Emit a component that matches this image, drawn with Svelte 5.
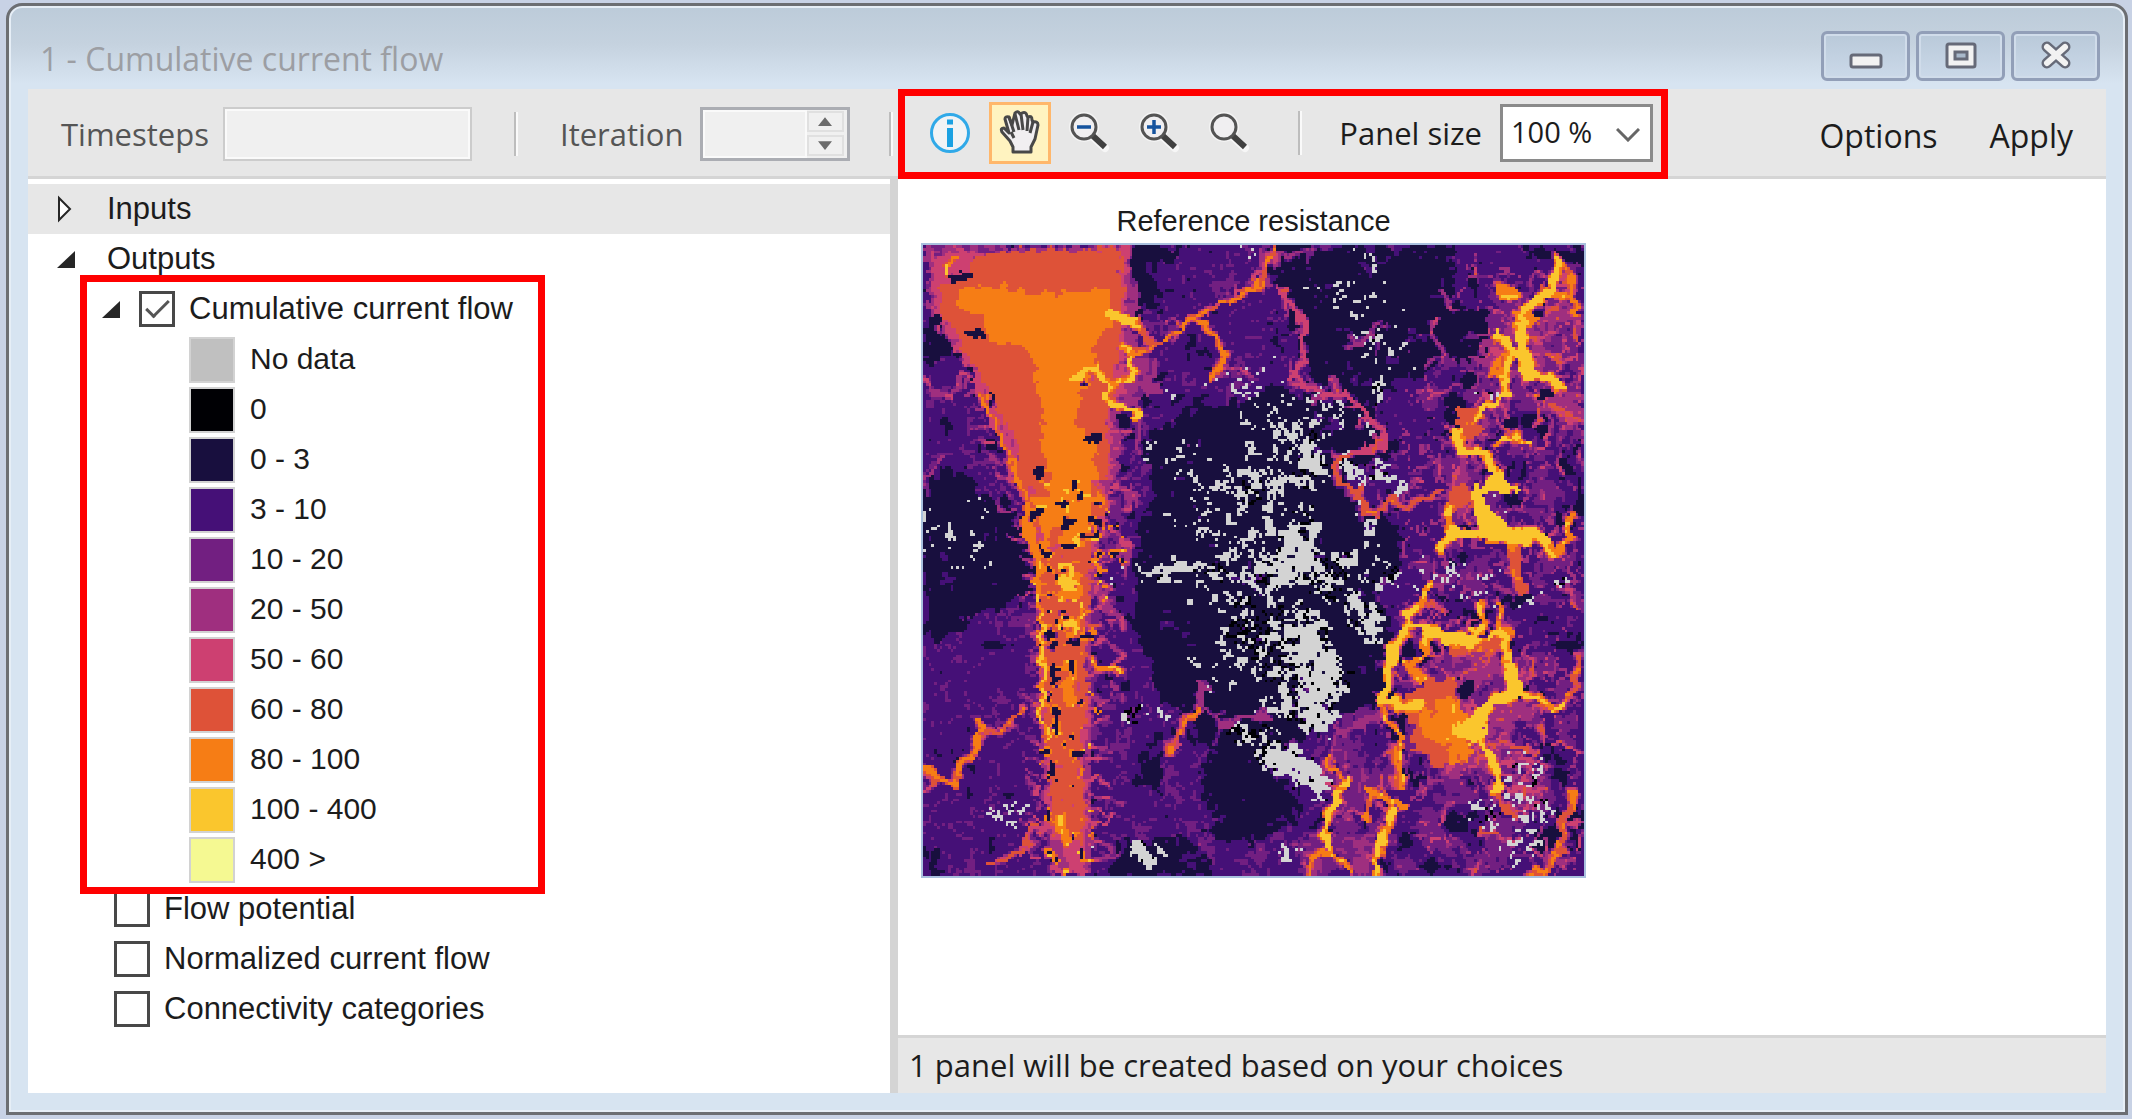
<script>
  const legend = [
    { label: 'No data', color: '#c0c0c0' },
    { label: '0', color: '#000004' },
    { label: '0 - 3', color: '#180f3e' },
    { label: '3 - 10', color: '#451077' },
    { label: '10 - 20', color: '#721f81' },
    { label: '20 - 50', color: '#9f2f7f' },
    { label: '50 - 60', color: '#cd4071' },
    { label: '60 - 80', color: '#de5238' },
    { label: '80 - 100', color: '#f67d15' },
    { label: '100 - 400', color: '#fac62d' },
    { label: '400 >', color: '#f5f992' }
  ];
  const palette = ['#000004', '#180f3e', '#451077', '#721f81', '#9f2f7f', '#cd4071', '#de5238', '#f67d15', '#fac62d', '#d3d3d3'];
  const NODATA = 9;

  let cumulative = $state(true);
  let flowPotential = $state(false);
  let normalized = $state(false);
  let categories = $state(false);
  let panelSize = $state('100');

  // Raster model: shapes are in map units (662 x 632), sampled on a coarse grid.
  const W = 662, H = 632, COLS = 240, ROWS = 228;

  const navy = [
    [[348,0],[541,0],[528,62],[561,72],[568,108],[488,125],[461,145],[438,152],[388,142],[381,95],[371,58],[358,38]],
    [[222,180],[300,160],[345,145],[440,155],[466,190],[466,210],[410,222],[440,270],[480,262],[480,320],[450,340],[475,400],[460,460],[400,480],[340,520],[380,560],[330,570],[300,560],[285,500],[260,470],[232,445],[215,380],[210,330],[215,290],[225,230]],
    [[0,235],[40,230],[60,255],[92,262],[100,300],[115,352],[60,370],[20,400],[0,410]],
    [[275,520],[340,510],[370,560],[345,600],[290,590]],
    [[200,600],[270,595],[290,632],[190,632]],
    [[205,0],[262,0],[255,18],[228,20],[235,68],[203,75]],
    [[0,62],[26,66],[36,110],[0,122]],
    [[218,520],[240,515],[245,540],[222,545]],
    [[0,600],[14,612],[20,632],[0,632]],
    [[650,560],[662,560],[662,605],[648,598]],
    [[202,86],[210,86],[212,104],[203,104]],
    [[188,145],[212,145],[214,158],[196,160]],
    [[186,178],[214,176],[218,194],[190,196]],
    [[590,0],[662,0],[662,20],[620,12]]
  ];
  const warm = [
    { v: 3.1, p: [[490,150],[662,0],[662,200],[655,632],[520,632],[400,632],[350,632],[410,500],[480,380],[500,300],[520,240]] },
    { v: 3.9, p: [[560,50],[662,20],[662,200],[590,130],[530,330],[520,250],[545,180]] },
    { v: 3.7, p: [[470,430],[560,400],[620,470],[560,530],[500,540]] },
    { v: 3.3, p: [[400,560],[440,530],[470,600],[480,632],[370,632]] },
    { v: 4.1, p: [[0,0],[206,0],[214,60],[214,110],[236,118],[234,150],[196,170],[192,250],[206,300],[176,370],[172,632],[126,632],[116,480],[116,350],[98,250],[60,150],[2,62]] },
    { v: 5.2, p: [[6,8],[204,4],[202,110],[212,120],[188,170],[188,250],[186,290],[164,370],[164,632],[130,632],[119,485],[118,352],[99,255],[60,152],[5,62]] },
    { v: 6.5, p: [[50,10],[80,6],[170,4],[196,10],[199,75],[194,125],[184,180],[185,232],[188,260],[172,300],[163,368],[164,450],[160,480],[160,600],[132,590],[122,485],[120,360],[106,295],[98,232],[86,178],[64,146],[40,110],[28,78],[12,55],[14,35],[42,28]] },
    { v: 7.5, p: [[31,45],[98,42],[138,52],[141,45],[188,48],[190,78],[175,98],[168,112],[178,125],[155,145],[155,172],[168,205],[181,252],[131,252],[121,205],[115,145],[105,102],[68,95],[58,72],[31,62]] },
    { v: 7.6, p: [[108,250],[185,245],[185,275],[150,300],[120,300]] },
    { v: 8.2, p: [[137,318],[153,318],[157,352],[136,356]] },
    { v: 6.6, p: [[465,460],[508,438],[535,435],[541,472],[565,480],[541,518],[515,522],[491,505],[495,478]] },
    { v: 7.4, p: [[500,462],[530,455],[560,490],[530,495],[505,500]] },
    { v: 8.4, p: [[533,485],[560,470],[567,485],[548,500],[535,495]] },
    { v: 7.3, p: [[588,68],[606,66],[620,74],[600,88],[590,82]] },
    { v: 6.5, p: [[534,170],[556,160],[562,190],[545,196]] },
    { v: 8.5, p: [[575,225],[594,244],[580,252],[570,246],[566,268],[582,278],[606,290],[545,294],[555,285],[550,250]] },
    { v: 6.5, p: [[525,245],[548,240],[552,262],[530,262]] }
  ];
  const holes = [[36,32,12,5],[52,88,8,4],[66,155,4,10],[165,131,12,6],[170,199,9,6],[118,230,5,7],[130,527,5,9],[131,428,4,12],[140,373,7,5],[150,398,6,6],[128,400,5,4],[12,70,6,8],[555,72,7,7],[618,68,8,7],[628,150,7,6],[546,442,7,12],[485,400,9,12],[408,587,5,7],[590,255,6,7],[550,285,8,4],[480,475,7,7]];
  const veins = [
    [7.2, 1, [201,108],[235,102],[248,88],[271,72],[288,62],[308,55],[335,42],[345,20],[350,0]],
    [7.4, 1, [271,72],[295,90],[302,115],[290,135]],
    [5, 1, [302,115],[325,130]],
    [8.6, 5, [188,68],[212,76]],
    [6.5, 5, [212,78],[228,95]],
    [8.6, 2, [151,135],[160,127],[175,125],[185,140],[185,155],[215,170]],
    [8, 2, [185,140],[208,132],[210,108],[198,105]],
    [4.6, 1, [215,170],[220,195],[214,205]],
    [5.6, 1, [358,42],[371,62],[381,82],[381,118],[370,132],[385,145],[428,152],[448,175],[465,185],[461,205],[431,208]],
    [6.6, 1, [431,208],[408,222],[418,238],[438,245],[443,268],[455,272],[468,252],[485,265],[501,252],[521,245]],
    [4.5, 2, [350,0],[338,20],[345,42]],
    [4.3, 1, [345,10],[390,6]],
    [4.3, 0, [423,105],[448,90],[455,78]],
    [8.6, 3, [635,12],[634,30],[630,45],[611,58],[598,68]],
    [7.5, 2, [630,45],[650,52],[655,70]],
    [7.3, 1, [634,15],[648,30],[650,48]],
    [8.9, 6, [601,78],[601,112],[606,128]],
    [8.5, 3, [606,128],[612,134],[630,130],[638,145]],
    [8.5, 2, [575,88],[592,112],[580,135],[585,148],[561,165],[553,172]],
    [7.6, 6, [592,50],[575,45]],
    [7.2, 4, [595,110],[578,115],[572,130]],
    [8.5, 3, [536,188],[540,205],[561,208],[575,228]],
    [7, 5, [545,180],[540,200],[560,210]],
    [6, 2, [630,160],[642,172],[660,176]],
    [8.2, 1, [575,198],[590,190],[605,200]],
    [8.9, 4, [521,305],[528,288],[570,286],[615,292],[622,296]],
    [8.9, 8, [560,288],[605,293]],
    [8.2, 2, [528,288],[528,262]],
    [8, 3, [615,292],[631,308],[645,295],[650,270]],
    [6.8, 4, [590,300],[595,335],[602,345]],
    [8.3, 2, [505,340],[495,358],[485,372],[488,382],[515,392],[545,398],[581,388],[585,415],[595,432],[595,448],[565,462],[545,485]],
    [8.8, 5, [505,387],[530,394],[548,400]],
    [6.8, 8, [535,405],[570,402],[585,390]],
    [8.9, 8, [588,425],[592,445]],
    [8.7, 6, [590,450],[565,462],[552,480]],
    [8.7, 3, [485,384],[471,405],[466,435],[461,458],[490,462],[500,460]],
    [8, 2, [505,392],[500,410],[488,422],[498,435]],
    [8, 2, [560,360],[562,380],[545,398]],
    [8, 1, [575,360],[580,388]],
    [6, 2, [495,358],[508,355],[520,368]],
    [8, 1, [460,468],[475,492],[480,505],[478,545]],
    [7, 3, [474,500],[474,540]],
    [4.5, 1, [458,468],[420,490],[408,510]],
    [7.6, 0, [408,510],[408,525],[418,535]],
    [8.3, 3, [425,535],[412,560],[402,590],[408,608]],
    [7.4, 2, [408,608],[390,612],[385,632]],
    [7.8, 0, [408,608],[425,628]],
    [7.6, 2, [445,545],[470,558],[485,562]],
    [8.3, 2, [470,558],[465,585],[457,600],[455,630]],
    [7, 1, [446,545],[443,575]],
    [8.6, 3, [555,495],[568,510],[575,535],[575,550]],
    [6.6, 2, [575,550],[590,570]],
    [5.5, 0, [575,535],[612,530]],
    [5.5, 0, [580,545],[625,548]],
    [5.2, 0, [575,525],[600,515],[625,520]],
    [5.2, 0, [588,565],[612,562]],
    [8.2, 1, [595,448],[615,450],[630,468],[645,455]],
    [6.8, 3, [645,455],[652,440],[655,425]],
    [7, 2, [650,550],[642,580],[640,605],[625,625],[610,630]],
    [6.5, 2, [655,410],[655,432]],
    [6, 1, [568,498],[615,505]],
    [7, 1, [98,465],[78,485],[62,490]],
    [7.4, 2, [58,480],[55,505],[38,522],[31,542],[11,532],[2,522]],
    [6.4, 0, [130,575],[115,580],[95,610],[68,618]],
    [7, 1, [275,465],[261,485],[245,508]],
    [4.6, 4, [278,440],[280,460]],
    [4.5, 1, [278,462],[300,482],[325,475],[345,470]],
    [8.3, 1, [118,352],[120,385],[120,440],[118,475],[125,495]],
    [8.2, 2, [160,370],[152,385],[142,372],[135,385]],
    [7.6, 6, [145,440],[150,455]],
    [7.6, 6, [138,580],[145,595]],
    [7.8, 2, [170,418],[180,425],[196,426]],
    [7.6, 1, [24,30],[24,18],[34,10]],
    [7.6, 0, [60,150],[96,232],[104,262]],
    [7.6, 3, [104,262],[106,290],[118,330]],
    [5, 2, [192,240],[212,250],[205,262]],
    [5, 2, [190,285],[205,300],[202,330]],
    [5, 2, [168,340],[195,370],[203,382]],
    [4.6, 1, [175,395],[200,412]],
    [4.8, 2, [0,130],[15,150],[28,152],[38,130]],
    [4.2, 1, [0,235],[20,212]]
  ];
  const sparse = [
    [430,40,45,40,0.1],[455,70,30,35,0.13],[460,110,25,18,0.1],[452,142,6,14,0.6],[450,92,10,6,0.5],[330,8,8,8,0.5],
    [330,140,35,22,0.13],[345,160,28,28,0.24],[260,140,20,16,0.16],[245,205,35,18,0.12],[300,240,40,30,0.28],[325,245,24,34,0.5],
    [400,158,24,12,0.35],[375,205,34,34,0.42],[385,218,16,32,0.75],[345,225,25,45,0.38],[405,178,28,18,0.3],[430,185,20,14,0.2],
    [420,225,14,8,0.75],[452,228,14,12,0.85],[480,244,7,7,1.2],[440,235,26,10,0.4],[270,270,40,25,0.24],[330,285,35,40,0.42],
    [378,300,26,34,0.9],[375,320,36,22,1],[255,329,42,7,1.1],[300,325,22,10,1],[345,330,34,34,0.46],[310,350,40,40,0.24],
    [415,330,18,28,0.6],[440,370,16,20,0.9],[455,382,10,8,0.8],[445,300,16,42,0.42],[325,385,25,45,0.5],[360,400,30,40,0.65],
    [380,395,20,38,1.05],[395,430,26,26,1.15],[410,435,22,20,1.05],[385,450,28,28,0.85],[345,425,26,26,0.48],[400,475,16,15,1.2],
    [350,470,28,25,0.4],[325,492,22,14,0.7],[345,505,18,18,0.85],[365,520,24,12,1.1],[390,532,24,14,1.2],[295,435,15,20,0.3],
    [275,415,8,6,0.4],[208,470,18,10,0.55],[232,478,16,12,0.3],[225,608,12,9,1.2],[175,605,8,20,0.35],[195,603,8,6,0.3],
    [90,565,18,14,0.36],[25,295,28,18,0.24],[55,310,18,20,0.18],[60,265,8,10,0.35],[15,285,12,20,0.2],[540,320,30,25,0.2],
    [535,345,20,14,0.4],[580,350,30,20,0.14],[640,340,8,8,0.8],[615,350,12,10,0.25],[462,335,10,16,0.5],[600,525,34,14,0.48],
    [612,550,16,18,1],[600,575,30,30,0.42],[570,580,16,22,0.48],[590,600,25,15,0.3],[370,612,12,8,0.4],[580,270,16,12,0.14],
    [560,150,12,6,0.5],[500,320,20,30,0.1],[185,330,20,10,0.12]
  ];

  function hash(x, y, s) {
    let h = Math.imul(x + 374761, 668265263) ^ Math.imul(y + 91177, 374761393) ^ Math.imul(s + 7, 1274126177);
    h = Math.imul(h ^ (h >>> 13), 1274126177);
    h = Math.imul(h ^ (h >>> 15), 2246822519);
    return ((h ^ (h >>> 16)) >>> 0) / 4294967296;
  }
  function noise(x, y, scale, s) {
    const gx = x / scale, gy = y / scale;
    const ix = Math.floor(gx), iy = Math.floor(gy);
    const fx = gx - ix, fy = gy - iy;
    const sx = fx * fx * (3 - 2 * fx), sy = fy * fy * (3 - 2 * fy);
    const a = hash(ix, iy, s), b = hash(ix + 1, iy, s), c = hash(ix, iy + 1, s), d = hash(ix + 1, iy + 1, s);
    return (a + (b - a) * sx) * (1 - sy) + (c + (d - c) * sx) * sy;
  }
  function inside(poly, x, y) {
    let hit = false;
    for (let i = 0, j = poly.length - 1; i < poly.length; j = i++) {
      const [xi, yi] = poly[i], [xj, yj] = poly[j];
      if (yi > y !== yj > y && x < ((xj - xi) * (y - yi)) / (yj - yi) + xi) hit = !hit;
    }
    return hit;
  }
  function toSegment(x, y, a, b) {
    const dx = b[0] - a[0], dy = b[1] - a[1];
    const t = Math.max(0, Math.min(1, ((x - a[0]) * dx + (y - a[1]) * dy) / (dx * dx + dy * dy)));
    return Math.hypot(x - a[0] - t * dx, y - a[1] - t * dy);
  }

  // Flatten the veins to segments and grow short side branches from them.
  const segments = [];
  function addSegment(peak, width, a, b) {
    const m = width + 8;
    segments.push({ peak, width, a, b, x0: Math.min(a[0], b[0]) - m, x1: Math.max(a[0], b[0]) + m, y0: Math.min(a[1], b[1]) - m, y1: Math.max(a[1], b[1]) + m });
  }
  function addSpur(x, y, angle, length, peak, seed) {
    const mid = [x + Math.cos(angle) * length * 0.5, y + Math.sin(angle) * length * 0.5];
    const bend = angle + (hash(seed, 3, 61) - 0.5) * 1.8;
    addSegment(peak, 0, [x, y], mid);
    addSegment(peak - 0.8, 0, mid, [mid[0] + Math.cos(bend) * length * 0.5, mid[1] + Math.sin(bend) * length * 0.5]);
  }
  veins.forEach(([peak, width, ...pts], k) => {
    for (let i = 1; i < pts.length; i++) {
      const [a, b] = [pts[i - 1], pts[i]];
      addSegment(peak, width, a, b);
      const steps = Math.floor(Math.hypot(b[0] - a[0], b[1] - a[1]) / 13);
      for (let s = 0; s < steps; s++) {
        const seed = k * 131 + i * 17 + s;
        const t = (s + hash(seed, 0, 60)) / steps;
        addSpur(a[0] + (b[0] - a[0]) * t, a[1] + (b[1] - a[1]) * t, hash(seed, 1, 60) * 6.28, 8 + hash(seed, 2, 60) * 16, Math.min(peak, 4.2 + hash(seed, 4, 60) * 2.4), seed);
      }
    }
  });
  for (let i = 0; i < 34; i++) {
    const y = 70 + i * 16.5;
    const t = Math.min(1, y / 350);
    addSpur(10 + 108 * t, y, 3.1 + hash(i, 1, 70), 10 + hash(i, 2, 70) * 16, 4.3 + hash(i, 3, 70) * 1.5, i + 900);
    addSpur(196 - 30 * t, y, hash(i, 4, 70) - 0.4, 16 + hash(i, 5, 70) * 26, 4.4 + hash(i, 6, 70) * 1.8, i + 950);
  }
  for (let i = 0; i < 70; i++) {
    addSpur(500 + hash(i, 1, 80) * 160, 20 + hash(i, 2, 80) * 600, hash(i, 3, 80) * 6.28, 14 + hash(i, 4, 80) * 24, 4.3 + hash(i, 5, 80) * 2.2, i + 1200);
  }

  function sample(c, r) {
    const x = ((c + 0.5) * W) / COLS, y = ((r + 0.5) * H) / ROWS;
    const n1 = noise(c, r, 2.2, 1) - 0.5, n2 = noise(c, r, 9, 2) - 0.5;
    const n3 = noise(c, r, 2.2, 3) - 0.5, n4 = noise(c, r, 9, 4) - 0.5;
    const wx = x + n1 * 16 + n2 * 20, wy = y + n3 * 16 + n4 * 20;
    const fine = noise(c, r, 2, 5) - 0.5;
    const broad = noise(c, r, 8, 6) - 0.5;

    let v = 2.5 + fine * 0.8 + broad * 1.1;
    if (inside(warm[0].p, wx, wy)) v = 2.6 + fine * 1.3 + broad * 2.4;
    for (let i = 1; i < 4; i++) if (inside(warm[i].p, wx, wy)) v = warm[i].v + fine * 1.4 + broad * 2.6;
    for (const p of navy) if (inside(p, wx, wy)) v = 1.25 + Math.max(0, fine + broad - 0.3) * 3;

    // fine capillaries running through the mid-valued areas
    const ridge = Math.abs(noise(c, r, 6, 8) + 0.35 * noise(c, r, 2.5, 9) - 0.67);
    if (ridge < 0.03 && v > 2) v += x > 480 ? 1.6 : 0.7;

    const sx = x + n1 * 10 + n2 * 8, sy = y + n3 * 10 + n4 * 8;
    for (let i = 4; i < warm.length; i++) {
      if (inside(warm[i].p, sx, sy)) v = warm[i].v + fine * 0.7 + (y > 240 ? broad * 1.2 : 0);
    }
    if (x > 108 && x < 212 && y > 235 && v > 4) {
      const pit = noise(c, r, 3, 12);
      if (pit > 0.79) v = 1.3 + fine;
      else if (pit > 0.69) v = 7.4 + fine * 2;
      else if (x > 168) v -= 3 * noise(c, r, 4, 13);
    }
    for (const [hx, hy, rx, ry] of holes) {
      if (((sx - hx) / rx) ** 2 + ((sy - hy) / ry) ** 2 < 1) v = 1.4;
    }
    const vx = x + (noise(c, r, 3, 21) - 0.5) * 9, vy = y + (noise(c, r, 3, 22) - 0.5) * 9;
    for (const s of segments) {
      if (vx < s.x0 || vx > s.x1 || vy < s.y0 || vy > s.y1) continue;
      const over = Math.max(0, toSegment(vx, vy, s.a, s.b) - 1 - s.width * 0.75);
      const level = s.peak + fine * 1.2 - over * 1.3;
      if (level > v && (over < 1.2 || fine > 0)) v = level;
    }

    let level = Math.max(1, Math.min(8, Math.floor(v)));
    if (level < 4) {
      let density = 0;
      for (const [bx, by, rx, ry, k] of sparse) {
        const q = ((wx - bx) / rx) ** 2 + ((wy - by) / ry) ** 2;
        if (q < 1) density = Math.max(density, k * (1 - q * 0.3));
      }
      if (density > 0) {
        const n = hash(c, r, 31) * 0.35 + noise(c, r, 2.2, 32) * 0.65;
        if (n < 0.2 + density * 0.48) level = NODATA;
        else if (density > 0.45 && hash(c, r, 33) > 0.6) level = 0;
      }
    }
    return level;
  }
  function rasterPaths() {
    const out = palette.map(() => '');
    for (let r = 0; r < ROWS; r++) {
      let start = 0, current = sample(0, r);
      for (let c = 1; c <= COLS; c++) {
        const next = c < COLS ? sample(c, r) : -1;
        if (next !== current) {
          out[current] += `M${start} ${r}h${c - start}v1h${start - c}z`;
          start = c;
          current = next;
        }
      }
    }
    return out;
  }
  const paths = rasterPaths();
</script>

{#snippet lens(kind)}
  <svg class="lens" viewBox="0 0 40 40" aria-hidden="true">
    <path d="M23 24 35 35" stroke="#f6f6f6" stroke-width="8" stroke-linecap="round" />
    <circle cx="14" cy="14" r="12" fill="#f2f2f4" stroke="#f4f4f4" stroke-width="6" />
    <path d="M22 22 35 34" stroke="#404040" stroke-width="6" />
    <circle cx="14" cy="14" r="12" fill="#f0eff1" stroke="#545454" stroke-width="3" />
    {#if kind !== 'reset'}<path d="M7 14H21" stroke="#15539e" stroke-width="3.5" />{/if}
    {#if kind === 'in'}<path d="M14 7V21" stroke="#15539e" stroke-width="3.5" />{/if}
  </svg>
{/snippet}

<main class="window">
  <header class="titlebar">
    <h1>1 - Cumulative current flow</h1>
    <div class="controls">
      <button aria-label="Minimize">
        <svg viewBox="0 0 34 28"><rect x="2" y="13" width="30" height="12" rx="2" fill="#f2f2f2" stroke="#666a78" stroke-width="3" /></svg>
      </button>
      <button aria-label="Maximize">
        <svg viewBox="0 0 34 28"><rect x="3" y="2" width="28" height="23" rx="2" fill="#f2f2f2" stroke="#666a78" stroke-width="3" /><rect x="11" y="10" width="12" height="7" fill="#a9b9cb" stroke="#666a78" stroke-width="3" /></svg>
      </button>
      <button aria-label="Close">
        <svg viewBox="0 0 34 28"><path d="M8 5 26 21M26 5 8 21" stroke="#666a78" stroke-width="11" stroke-linecap="round" /><path d="M8 5 26 21M26 5 8 21" stroke="#f2f2f2" stroke-width="6" stroke-linecap="round" /></svg>
      </button>
    </div>
  </header>

  <div class="client">
    <div class="toolbar">
      <div class="range">
        <label for="timesteps">Timesteps</label>
        <input id="timesteps" class="steps" type="text" disabled />
        <span class="sep"></span>
        <label for="iteration">Iteration</label>
        <div class="spin">
          <input id="iteration" type="text" disabled />
          <div class="arrows">
            <button aria-label="Increase iteration" disabled><svg viewBox="0 0 16 10"><path d="M0 10 8 0 16 10z" fill="#6b6b6b" /></svg></button>
            <button aria-label="Decrease iteration" disabled><svg viewBox="0 0 16 10"><path d="M0 0H16L8 10z" fill="#6b6b6b" /></svg></button>
          </div>
        </div>
        <span class="sep last"></span>
      </div>
      <div class="tools">
        <button class="tool" aria-label="Information">
          <svg class="info" viewBox="0 0 42 42"><circle cx="21" cy="21" r="18.5" fill="#f1f3f5" stroke="#30a9e8" stroke-width="3" /><path d="M18 7.500h6v5h-6zM18 16h6v19h-6z" fill="#1ba1e2" /></svg>
        </button>
        <button class="tool active" aria-label="Pan" aria-pressed="true">
          <svg class="hand" viewBox="0 0 42 46">
            <path d="M14 42V37L11 31 3 22Q1 18 5 18L10 23 6 9Q6 6 10 7L13 15 16 3Q19 0 21 4L23 3Q27 1 28 6L29 7Q33 5 33 10L34 12Q39 11 39 15L36 29 32 37V42Z" fill="#f1eff1" stroke="#484848" stroke-width="3" stroke-linejoin="round" />
            <path d="M10 7 15 22M16 4 20 20M22 4 24 20M29 7 28 21M34 12 31 23M12 22 15 28" fill="none" stroke="#484848" stroke-width="3" />
          </svg>
        </button>
        <button class="tool" aria-label="Zoom out">{@render lens('out')}</button>
        <button class="tool" aria-label="Zoom in">{@render lens('in')}</button>
        <button class="tool" aria-label="Reset zoom">{@render lens('reset')}</button>
        <span class="sep mid"></span>
        <label for="panel">Panel size</label>
        <div class="drop">
          <select id="panel" bind:value={panelSize}>
            <option value="100">100 %</option>
            <option value="50">50 %</option>
          </select>
          <svg viewBox="0 0 24 14" aria-hidden="true"><path d="M1 1 12 12 23 1" fill="none" stroke="#666" stroke-width="3" /></svg>
        </div>
      </div>
      <div class="actions">
        <button>Options</button>
        <button>Apply</button>
      </div>
    </div>

    <div class="body">
      <nav class="tree" aria-label="Layers">
        <div class="row selected">
          <button class="twist" aria-label="Expand inputs"><svg viewBox="0 0 20 28"><path d="M3 3V25L14 14z" fill="#fff" stroke="#262626" stroke-width="2" /></svg></button>
          <span>Inputs</span>
        </div>
        <div class="row">
          <button class="twist" aria-label="Collapse outputs"><svg viewBox="0 0 20 28"><path d="M19 6V23H1z" fill="#262626" /></svg></button>
          <span>Outputs</span>
        </div>
        <section class="group">
          <div class="row child">
            <button class="twist" aria-label="Collapse cumulative current flow"><svg viewBox="0 0 20 28"><path d="M19 6V23H1z" fill="#262626" /></svg></button>
            <label><input type="checkbox" bind:checked={cumulative} />Cumulative current flow</label>
          </div>
          <ul>
            {#each legend as item}
              <li><span class="swatch" style:background={item.color}></span>{item.label}</li>
            {/each}
          </ul>
        </section>
        <div class="row leaf"><label><input type="checkbox" bind:checked={flowPotential} />Flow potential</label></div>
        <div class="row leaf"><label><input type="checkbox" bind:checked={normalized} />Normalized current flow</label></div>
        <div class="row leaf"><label><input type="checkbox" bind:checked={categories} />Connectivity categories</label></div>
      </nav>
      <section class="preview">
        <figure>
          <figcaption>Reference resistance</figcaption>
          <svg class="map" viewBox="0 0 {COLS} {ROWS}" preserveAspectRatio="none" role="img" aria-label="Cumulative current flow map">
            <rect width={COLS} height={ROWS} fill={palette[1]} />
            {#each paths as d, i}<path {d} fill={palette[i]} />{/each}
          </svg>
        </figure>
        <footer>1 panel will be created based on your choices</footer>
      </section>
    </div>
  </div>
</main>

<style>
  :global(body) { margin: 0; background: #c8d2e5; }
  * { box-sizing: border-box; }
  button { font: inherit; color: inherit; padding: 0; margin: 0; border: 0; background: none; }
  svg { display: block; }

  .window {
    display: flex;
    flex-direction: column;
    min-height: calc(100vh - 7px);
    margin: 3px 4px 4px 6px;
    padding: 0 19px 19px;
    border: 3px solid #6c6e72;
    border-radius: 16px 16px 0 0;
    box-shadow: inset 0 0 0 2px #e6eef6;
    background: linear-gradient(#bccbd9 0, #c5d2df 38px, #d7e4f1 78px);
    font: 31px/40px "Open Sans", "Noto Sans", sans-serif;
    color: #1c1c1c;
  }
  .titlebar { display: flex; justify-content: space-between; padding: 25px 6px 0 12px; height: 83px; }
  h1 { margin: 0; font-size: 32px; line-height: 56px; font-weight: 400; color: #9c9ea3; }
  .controls { display: flex; gap: 6px; }
  .controls button {
    display: grid;
    place-items: center;
    width: 89px;
    height: 50px;
    border: 3px solid #929fb8;
    border-radius: 6px;
    box-shadow: inset 0 0 0 2px #d0dcea;
    background: linear-gradient(#b9c9d9, #cbd9e9);
  }
  .controls svg { width: 34px; height: 28px; fill: none; overflow: visible; }

  .client { flex: 1; display: flex; flex-direction: column; }
  .toolbar { display: flex; height: 90px; background: #e7e7e7; border-bottom: 3px solid #d5d5d5; }
  .range { display: flex; align-items: center; flex: 0 0 870px; padding: 2px 0 0 33px; color: #555; }
  .range input { height: 54px; border: 2px solid #ccc; background: #f0f0f0; box-shadow: inset 0 0 0 2px #fafafa; }
  .range .steps { width: 249px; margin-left: 14px; }
  .sep { width: 4px; height: 44px; background: linear-gradient(90deg, #bdbdbd 50%, #fafafa 50%); }
  .range .sep { margin: 0 42px; }
  .range .sep.last { margin: 0 5px 0 auto; }
  .spin { display: flex; width: 150px; height: 54px; margin-left: 16px; border: 3px solid #abadb3; background: #f0f0f0; }
  .spin input { flex: 1; min-width: 0; height: auto; border: 0; }
  .arrows { display: flex; flex-direction: column; gap: 3px; width: 40px; padding: 1px 3px 2px 0; }
  .arrows button { flex: 1; display: grid; place-items: center; border: 2px solid #e0e0e0; }
  .arrows svg { width: 14px; height: 9px; }

  .tools { position: relative; display: flex; align-items: center; width: 770px; padding: 2px 15px 2px 21px; }
  .tools::after { content: ""; position: absolute; inset: 0 0 -3px; border: 7px solid #f00; pointer-events: none; }
  .tool { display: grid; place-items: center; width: 62px; height: 62px; margin-right: 8px; border: 3px solid transparent; }
  .tool.active { border-color: #ffb76b; background: #fff3c0; }
  .info { width: 42px; height: 42px; }
  .hand { width: 42px; height: 46px; }
  .lens { width: 40px; height: 40px; fill: none; overflow: visible; }
  .sep.mid { margin: 0 37px 0 auto; }
  .drop { position: relative; margin-left: 18px; }
  .drop select {
    appearance: none;
    width: 153px;
    height: 58px;
    padding: 0 0 2px 8px;
    border: 3px solid #8a8a8a;
    border-radius: 0;
    background: #fff;
    color: #1c1c1c;
    font: 29px/40px "Open Sans", "Noto Sans", sans-serif;
  }
  .drop svg { position: absolute; right: 13px; top: 24px; width: 24px; height: 14px; pointer-events: none; }
  .actions { display: flex; align-items: center; gap: 52px; margin-left: auto; padding: 6px 33px 0 0; font-size: 32px; }

  .body { flex: 1; display: grid; grid-template-columns: 870px 1fr; background: #fff; }
  .tree { padding-top: 5px; border-right: 8px solid #d4d4d4; font: 31px/50px "Liberation Sans", Arial, sans-serif; }
  .row { display: flex; align-items: center; height: 50px; padding-left: 28px; gap: 31px; }
  .row.selected { background: #e7e7e7; }
  .row.child { padding-left: 73px; gap: 18px; }
  .row.leaf { padding-left: 86px; }
  .twist svg { width: 20px; height: 28px; }
  label { white-space: nowrap; }
  .row label { display: flex; align-items: center; gap: 14px; }
  .row input {
    appearance: none;
    width: 36px;
    height: 36px;
    margin: 0;
    border: 3px solid #484848;
    background: #fff;
  }
  .row input:checked::after {
    content: "";
    display: block;
    width: 20px;
    height: 9px;
    margin: 6px 0 0 4px;
    border: solid #555;
    border-width: 0 0 3px 3px;
    transform: rotate(-45deg);
  }
  .group { position: relative; }
  .group::after { content: ""; position: absolute; left: 52px; top: -9px; width: 451px; bottom: -10px; border: 7px solid #f00; pointer-events: none; }
  ul { list-style: none; margin: 0; padding: 0 0 0 161px; font-size: 30px; }
  li { display: flex; align-items: center; gap: 15px; height: 50px; }
  .swatch { width: 46px; height: 46px; margin-top: 2px; border: 2px solid #d2d2d2; }

  .preview { display: flex; flex-direction: column; }
  figure { width: 665px; margin: 20px 23px; }
  figcaption { font: 29px/44px "Liberation Sans", Arial, sans-serif; text-align: center; }
  .map { width: 100%; height: 635px; border: 2px solid #a9c0de; shape-rendering: crispEdges; }
  footer { margin-top: auto; padding: 7px 11px 8px; border-top: 3px solid #d5d5d5; background: #e7e7e7; }
</style>
